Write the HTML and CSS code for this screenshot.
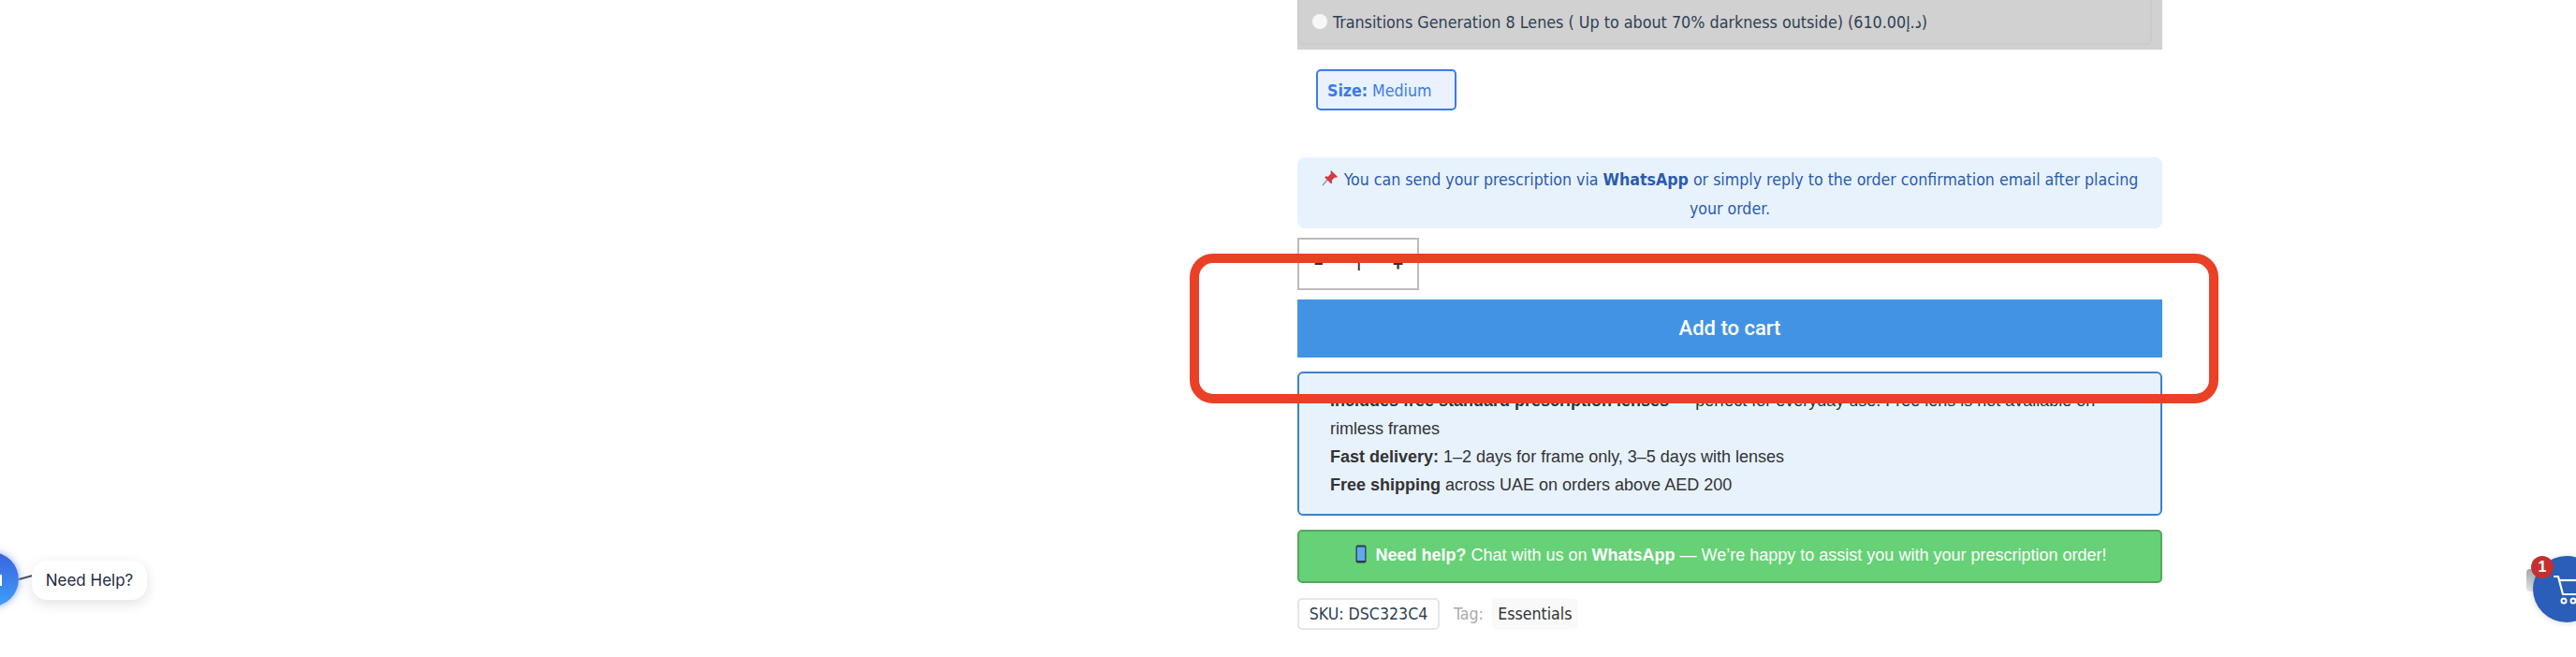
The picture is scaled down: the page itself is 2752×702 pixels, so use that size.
FILE: index.html
```html
<!DOCTYPE html>
<html lang="en">
<head>
<meta charset="utf-8">
<title>Product options</title>
<link rel="stylesheet" href="styles.css">
</head>
<body>
<main class="summary">
  <div class="lens-band">
    <label class="lens-option"><span class="radio"></span><span>Transitions Generation 8 Lenes ( Up to about 70% darkness outside) (610.00د.إ)</span></label>
  </div>
  <div class="size-row"><span class="size-chip"><b>Size:</b> Medium</span></div>
  <p class="rx-note">
    <svg class="pin" viewBox="0 0 20 20" aria-hidden="true"><path d="M1 19 8 11" stroke="#8a9098" stroke-width="1.6"/><path d="M11 1 19 9 16.500 10 15.500 9.500 12 13 12.500 16 11 17 3.500 9.500 5 8 7.500 8.500 11 5 10.500 3.500Z" fill="#d23a45"/></svg>
    You can send your prescription via <b>WhatsApp</b> or simply reply to the order confirmation email after placing your order.
  </p>
  <div class="qty"><span class="qty-btn">−</span><span class="qty-val">1</span><span class="qty-btn">+</span></div>
  <button class="add-cart">Add to cart</button>
  <div class="info">
    <p><b>Includes free standard prescription lenses</b> — perfect for everyday use. Free lens is not available on rimless frames</p>
    <p><b>Fast delivery:</b> 1–2 days for frame only, 3–5 days with lenses</p>
    <p><b>Free shipping</b> across UAE on orders above AED 200</p>
  </div>
  <div class="help-bar">
    <svg class="phone" viewBox="0 0 12 20" aria-hidden="true"><rect x="0.500" y="0.500" width="11" height="19" rx="2" fill="#2f3b4a"/><rect x="1.800" y="2.500" width="8.400" height="14.500" fill="#62a8ec"/></svg>
    <b>Need help?</b> Chat with us on <b>WhatsApp</b> — We’re happy to assist you with your prescription order!
  </div>
  <div class="meta">
    <span class="sku">SKU: DSC323C4</span>
    <span class="tag-label">Tag:</span>
    <span class="tag">Essentials</span>
  </div>
</main>

<div class="highlight"></div>

<div class="chat">
  <span class="chat-circle"><span class="chat-glyph"></span></span>
  <span class="chat-line"></span>
  <span class="chat-bubble">Need Help?</span>
</div>

<div class="cart">
  <span class="cart-thumb"></span>
  <span class="cart-circle">
    <svg class="cart-icon" viewBox="0 0 48 36" aria-hidden="true"><path d="M3 2H7L12 21H40" fill="none" stroke="#fff" stroke-width="2.200" stroke-linecap="round" stroke-linejoin="round"/><path d="M8 6H40" fill="none" stroke="#fff" stroke-width="2.200"/><circle cx="13" cy="28" r="2.500" fill="none" stroke="#fff" stroke-width="2"/><circle cx="23" cy="28" r="2.500" fill="none" stroke="#fff" stroke-width="2"/></svg>
  </span>
  <span class="cart-badge">1</span>
</div>
</body>
</html>
```

FILE: styles.css
```css
* { box-sizing: border-box; }
html, body { margin: 0; height: 702px; overflow: hidden; background: #fff; }
body { position: relative; font-family: "Liberation Sans", Arial, sans-serif; }

.summary { width: 924px; margin-left: 1386px; }

.lens-band { height: 53px; background: #d1d1d1; padding-right: 11px; }
.lens-option {
  height: 48px; display: flex; align-items: center; padding: 1px 0 0 14px;
  border: solid #cbcbcb; border-width: 0 2px 2px 2px; border-radius: 0 0 6px 6px;
  font-family: "DejaVu Sans", sans-serif; font-stretch: condensed; font-size: 17.750px; color: #2f3f52;
}
.radio { width: 16px; height: 16px; border-radius: 50%; background: #f7f7f7; margin: -1px 6px 0 0; flex: none; }

.size-row { padding: 21px 0 0 20px; height: 115px; }
.size-chip {
  display: flex; align-items: center; width: 150px; height: 44px; padding: 1px 0 0 10px;
  border: 2px solid #3b7bea; border-radius: 5px; background: #e9f2fe; color: #3b7bea;
  font-family: "DejaVu Sans", sans-serif; font-stretch: condensed; font-size: 17.600px;
}
.size-chip b { margin-right: 5px; }

.rx-note {
  margin: 0; height: 76px; padding: 9px 16px 0; background: #e8f2fd; border-radius: 8px;
  color: #2a5bb0; text-align: center; line-height: 31px;
  font-family: "DejaVu Sans", sans-serif; font-stretch: condensed; font-size: 17.600px;
}
.pin { width: 18px; height: 18px; vertical-align: -1px; margin-right: 1px; }

.qty {
  display: flex; align-items: center; justify-content: space-between;
  width: 130px; height: 56px; margin-top: 10px; padding: 0 15px;
  border: 2px solid #bbb; color: #333; font-family: Roboto, sans-serif; font-size: 20px;
}
.qty-btn { font-weight: 500; }

.add-cart {
  display: block; width: 100%; height: 62px; margin-top: 10px; padding: 0 0 1px; border: 0;
  background: #4293e4; color: #fff; font-family: Roboto, sans-serif; font-size: 22px; font-weight: 500;
}

.info {
  height: 154px; margin-top: 15px; padding: 14px 33px 0;
  border: 2px solid #3d81c7; border-radius: 6px; background: #e7f2fd;
  color: #333; font-size: 18px; line-height: 30px;
}
.info p { margin: 0; }

.help-bar {
  height: 57px; margin-top: 15px; padding: 13px 0 0 2px;
  border: 2px solid #55a65f; border-radius: 5px; background: #66d176;
  color: #fff; font-size: 18px; line-height: 24px; text-align: center;
}
.phone { width: 12px; height: 20px; vertical-align: -3px; margin-right: 5px; }

.meta {
  display: flex; align-items: center; height: 34px; margin-top: 16px;
  font-family: "DejaVu Sans", sans-serif; font-stretch: condensed; font-size: 17.600px;
}
.sku {
  display: flex; align-items: center; justify-content: center; width: 152px; height: 34px;
  border: 2px solid #e5e5e5; border-radius: 5px; color: #2f3f52;
}
.tag-label { margin: 0 9px 0 15px; color: #aaa; }
.tag {
  display: flex; align-items: center; justify-content: center; width: 92px; height: 34px;
  border-radius: 5px; background: #f9f9f9; color: #333;
}

.highlight {
  position: absolute; left: 1271px; top: 271px; width: 1099px; height: 160px;
  border: 10px solid #ea4026; border-radius: 25px;
}

.chat { position: absolute; left: 0; top: 570px; width: 180px; height: 100px; }
.chat-circle {
  position: absolute; left: -38px; top: 20px; width: 58px; height: 58px; border-radius: 50%;
  background: linear-gradient(180deg, #3a62dd, #3ea0fa); box-shadow: 0 0 8px rgba(60, 90, 255, .55);
}
.chat-glyph { position: absolute; left: 38px; top: 24px; width: 2px; height: 12px; background: #fff; }
.chat-line {
  position: absolute; left: 20px; top: 46px; width: 15px; height: 1.500px;
  background: #4a5568; transform: rotate(-16deg);
}
.chat-bubble {
  position: absolute; left: 34px; top: 29px; width: 123px; height: 42px;
  display: flex; align-items: center; justify-content: center;
  border-radius: 16px; background: #fff; box-shadow: 0 4px 14px rgba(0, 0, 0, .12);
  font-family: Inter, sans-serif; font-size: 17px; color: #1f2a44;
}

.cart { position: absolute; left: 2690px; top: 590px; width: 62px; height: 80px; }
.cart-thumb {
  position: absolute; left: 9px; top: 18px; width: 12px; height: 24px;
  border-radius: 4px; background: linear-gradient(180deg, #a0a8a8, #e4e6e6);
}
.cart-circle {
  position: absolute; left: 16px; top: 4px; width: 72px; height: 71px;
  border-radius: 50%; background: #2a5eb8; box-shadow: 0 1px 6px rgba(0, 0, 0, .15);
}
.cart-icon { position: absolute; left: 20px; top: 20px; width: 48px; height: 36px; }
.cart-badge {
  position: absolute; left: 14px; top: 4px; width: 24px; height: 24px;
  display: flex; align-items: center; justify-content: center;
  border-radius: 50%; background: #c43030; color: #fff; font-size: 16px; font-weight: 700;
}
```
